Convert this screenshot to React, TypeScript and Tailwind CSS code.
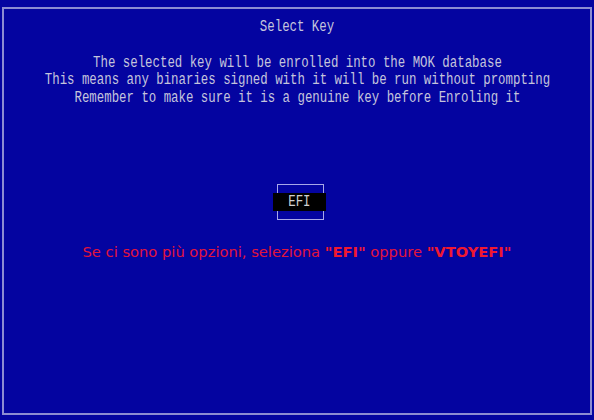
export default function App() {
  const mono = { fontFamily: '"Liberation Mono", "DejaVu Sans Mono", monospace' };
  const lines = [
    "The selected key will be enrolled into the MOK database",
    "This means any binaries signed with it will be run without prompting",
    "Remember to make sure it is a genuine key before Enroling it",
  ];
  return (
    <div className="w-[594px] h-[420px] bg-[#0404a0] pt-[7px] pl-[2px] overflow-hidden">
      <div className="w-[590px] h-[408px] border-2 border-[#8c8cd2] flex flex-col items-center">
        <div
          className="mt-[10px] text-[16px] leading-[17.5px] text-[#c4c4dc] whitespace-pre scale-x-[0.774]"
          style={mono}
        >
          Select Key
        </div>
        <div
          className="mt-[18px] flex flex-col items-center text-[16px] leading-[17.5px] text-[#c4c4dc] whitespace-pre scale-x-[0.774]"
          style={mono}
        >
          {lines.map((l, i) => (
            <div key={i}>{l}</div>
          ))}
        </div>
        <div className="mt-[77px] ml-[6px] relative w-[47px] h-[36px] border border-[#a8a8e8]">
          <div
            className="absolute left-[-5px] right-[-3px] top-[8px] h-[18px] bg-black flex items-center justify-center text-[16px] text-[#d0d0d0]"
            style={mono}
          >
            <span className="scale-x-[0.774]">EFI</span>
          </div>
        </div>
        <div
          className="mt-[22px] text-[14.7px] leading-[20px] text-[#e2143c]"
          style={{ fontFamily: '"DejaVu Sans", Verdana, sans-serif' }}
        >
          Se ci sono più opzioni, seleziona <b className="text-[#f01830]">"EFI"</b> oppure{" "}
          <b className="text-[#f01830]">"VTOYEFI"</b>
        </div>
      </div>
    </div>
  );
}
